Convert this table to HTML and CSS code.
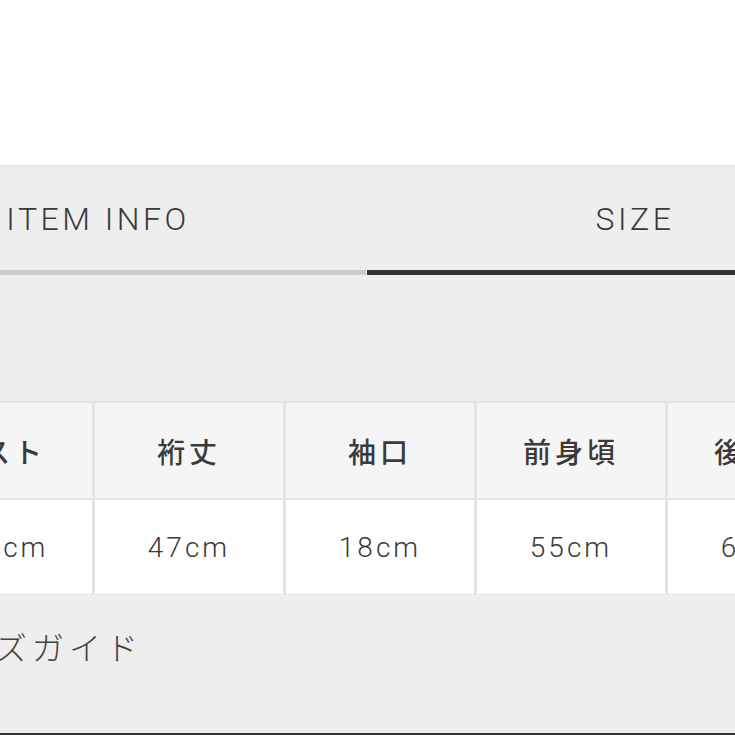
FILE: index.html
```html
<!DOCTYPE html>
<html lang="ja">
  <head>
    <meta charset="UTF-8" />
    <meta name="viewport" content="width=device-width, initial-scale=1.0" />
    <title>SIZE</title>
    <link rel="stylesheet" href="styles.css">
  </head>
  <body>
    <div class="top"></div>

    <section class="info">
      <nav class="tabs">
        <div class="tab">ITEM INFO</div>
        <div class="tab active">SIZE</div>
      </nav>

      <div class="size-table">
        <div class="cell head">バスト</div>
        <div class="cell head">裄丈</div>
        <div class="cell head">袖口</div>
        <div class="cell head">前身頃</div>
        <div class="cell head">後身頃</div>
        <div class="cell">102cm</div>
        <div class="cell">47cm</div>
        <div class="cell">18cm</div>
        <div class="cell">55cm</div>
        <div class="cell">64cm</div>
      </div>

      <a class="guide">サイズガイド</a>
    </section>
  </body>
</html>
```

FILE: styles.css
```css
:root {
  --bg-color: #eeeeee;
  --text-color: #3a3a3a;
  --line-color: #e4e4e4;
}

* {
  box-sizing: border-box;
  margin: 0;
  padding: 0;
}

html,
body {
  height: 100%;
  overflow: hidden;
}

body {
  font-family: Roboto, "Noto Sans CJK JP", sans-serif;
  color: var(--text-color);
  background: #ffffff;
}

.top {
  height: 165px;
  background: #ffffff;
}

.info {
  height: 570px;
  background: var(--bg-color);
  border-top: 1px solid var(--line-color);
  border-bottom: 2px solid #333333;
  overflow: hidden;
}

.tabs {
  display: flex;
  gap: 1px;
  width: 1073px;
  margin-left: -170px;
}

.tab {
  flex: 1;
  height: 109px;
  padding-top: 34px;
  text-align: center;
  font-size: 32px;
  font-weight: 300;
  letter-spacing: 3.5px;
  line-height: 38px;
  border-bottom: 5px solid #cccccc;
}

.tab.active {
  border-bottom-color: #333333;
}

.size-table {
  display: grid;
  grid-template-columns: repeat(5, 188px);
  grid-template-rows: 95px 94px;
  gap: 2px 3px;
  width: max-content;
  margin: 126px 0 0 -96px;
  padding: 2px 0 1px;
  background: #e3e3e3;
}

.cell {
  display: flex;
  align-items: center;
  justify-content: center;
  background: #ffffff;
  font-size: 28px;
  font-weight: 300;
  letter-spacing: 3px;
}

.cell.head {
  background: #f5f5f5;
  font-family: "Noto Sans CJK JP", sans-serif;
  font-weight: 500;
  letter-spacing: 4px;
}

.guide {
  display: block;
  margin: 31px 0 0 -78px;
  font-family: "Noto Sans CJK JP", sans-serif;
  font-size: 32px;
  font-weight: 300;
  letter-spacing: 5px;
  line-height: 40px;
  color: #444444;
}
```
